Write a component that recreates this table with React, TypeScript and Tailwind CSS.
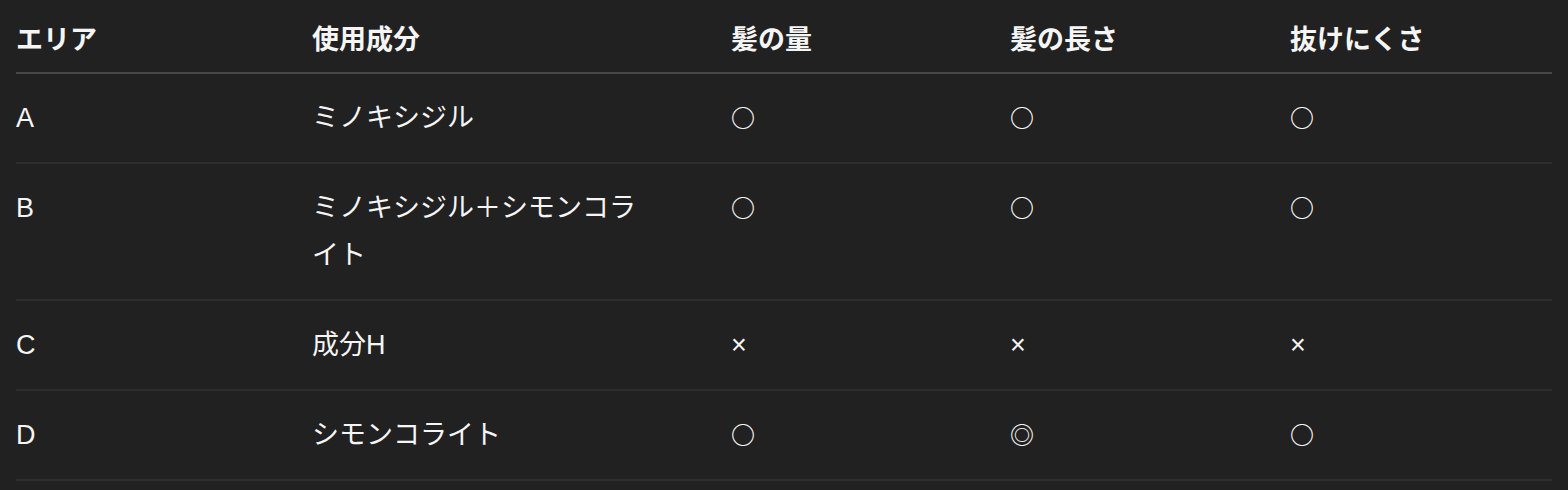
import React from "react";

const rows: { area: string; ing: string; a: string; b: string; c: string }[] = [
  { area: "A", ing: "ミノキシジル", a: "○", b: "○", c: "○" },
  { area: "B", ing: "ミノキシジル＋シモンコライト", a: "○", b: "○", c: "○" },
  { area: "C", ing: "成分H", a: "×", b: "×", c: "×" },
  { area: "D", ing: "シモンコライト", a: "○", b: "◎", c: "○" },
];

function Mark({ v }: { v: string }) {
  if (v === "×") return <span>{v}</span>;
  if (v === "◎")
    return (
      <span
        className="text-[24px] font-medium leading-none"
        style={{ fontFamily: '"Noto Sans CJK JP", sans-serif' }}
      >
        {v}
      </span>
    );
  return (
    <span
      className="text-[24px] font-bold leading-none"
      style={{ fontFamily: '"Noto Sans CJK JP", sans-serif' }}
    >
      {v}
    </span>
  );
}

export default function App() {
  return (
    <div
      className="min-h-[490px] w-full bg-[#212121] px-4 text-[#f5f5f5]"
      style={{ fontFamily: '"Liberation Sans", "Noto Sans CJK JP", sans-serif' }}
    >
      <table className="w-full table-fixed border-collapse text-left text-[27px] leading-[47px]">
        <colgroup>
          <col className="w-[296px]" />
          <col className="w-[419px]" />
          <col className="w-[279px]" />
          <col className="w-[280px]" />
          <col />
        </colgroup>
        <thead>
          <tr className="border-b-2 border-[#474747]">
            {["エリア", "使用成分", "髪の量", "髪の長さ", "抜けにくさ"].map((h) => (
              <th key={h} className="pt-[17px] pb-[8px] pr-[70px] align-top font-bold">
                {h}
              </th>
            ))}
          </tr>
        </thead>
        <tbody>
          {rows.map((r) => (
            <tr key={r.area} className="border-b-2 border-[#2e2e2e]">
              <td className="pt-[21px] pb-[20px] pr-[70px] align-top">{r.area}</td>
              <td className="pt-[21px] pb-[20px] pr-[70px] align-top">{r.ing}</td>
              <td className="pt-[21px] pb-[20px] pr-[70px] align-top"><Mark v={r.a} /></td>
              <td className="pt-[21px] pb-[20px] pr-[70px] align-top"><Mark v={r.b} /></td>
              <td className="pt-[21px] pb-[20px] pr-[70px] align-top"><Mark v={r.c} /></td>
            </tr>
          ))}
        </tbody>
      </table>
    </div>
  );
}
